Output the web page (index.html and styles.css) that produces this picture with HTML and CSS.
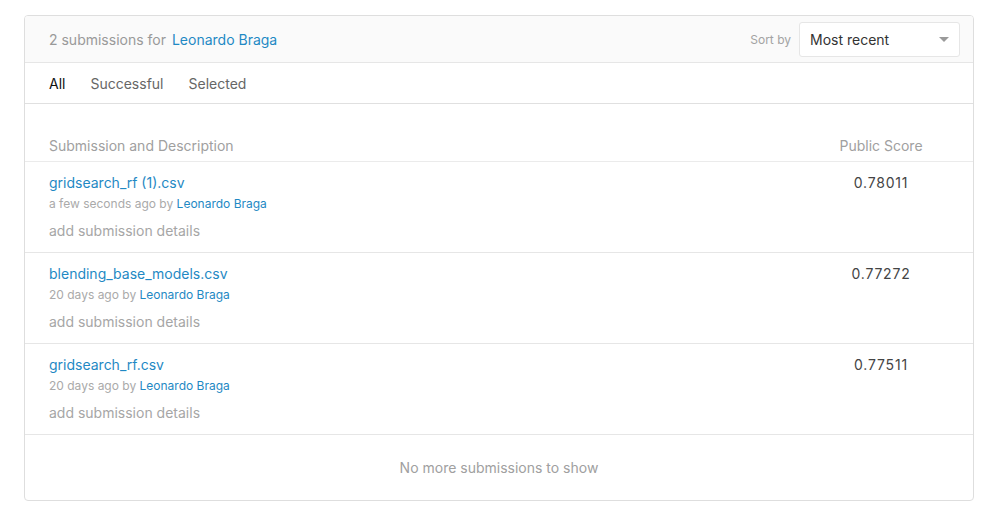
FILE: index.html
```html
<!DOCTYPE html>
<html>
<head>
<meta charset="utf-8">
<link rel="stylesheet" href="styles.css">
</head>
<body>
<div class="card">
  <div class="card-head">
    <div class="title">2 submissions for <a class="link">Leonardo Braga</a></div>
    <div class="sort">
      <span class="sort-label">Sort by</span>
      <div class="select">
        <span>Most recent</span>
        <span class="caret"></span>
      </div>
    </div>
  </div>
  <div class="tabs">
    <span class="tab active">All</span>
    <span class="tab">Successful</span>
    <span class="tab">Selected</span>
  </div>
  <div class="table">
    <div class="thead">
      <div class="col-main">Submission and Description</div>
      <div class="col-score">Public Score</div>
    </div>
    <div class="row">
      <div class="col-main">
        <a class="name">gridsearch_rf (1).csv</a>
        <div class="meta">a few seconds ago by <a class="link">Leonardo Braga</a></div>
        <div class="details">add submission details</div>
      </div>
      <div class="col-score score">0.78011</div>
    </div>
    <div class="row">
      <div class="col-main">
        <a class="name">blending_base_models.csv</a>
        <div class="meta">20 days ago by <a class="link">Leonardo Braga</a></div>
        <div class="details">add submission details</div>
      </div>
      <div class="col-score score">0.77272</div>
    </div>
    <div class="row">
      <div class="col-main">
        <a class="name">gridsearch_rf.csv</a>
        <div class="meta">20 days ago by <a class="link">Leonardo Braga</a></div>
        <div class="details">add submission details</div>
      </div>
      <div class="col-score score">0.77511</div>
    </div>
    <div class="foot">No more submissions to show</div>
  </div>
</div>
</body>
</html>
```

FILE: styles.css
```css
* { box-sizing: border-box; }
html, body { margin: 0; padding: 0; background: #fff; }
body {
  font-family: Inter, "Noto Sans", sans-serif;
  font-size: 14px;
  color: #333;
  padding: 15px 25px 0 24px;
}
.card {
  width: 950px;
  border: 1px solid #dedede;
  border-radius: 4px;
  overflow: hidden;
}
.card-head {
  height: 47px;
  background: #fafafa;
  border-bottom: 1px solid #e6e6e6;
  display: flex;
  align-items: center;
  justify-content: space-between;
  padding: 0 13px 0 24px;
}
.title { color: #999; font-size: 14px; }
.link { color: #1f89c4; text-decoration: none; }
.title .link { margin-left: 2px; }
.sort { display: flex; align-items: center; gap: 8px; }
.sort-label { color: #a3a3a3; font-size: 12px; }
.select {
  width: 161px;
  height: 35px;
  background: #fff;
  border: 1px solid #e6e6e6;
  border-radius: 3px;
  display: flex;
  align-items: center;
  justify-content: space-between;
  padding: 0 10px 0 10px;
  color: #333;
  font-size: 14px;
}
.caret {
  width: 0; height: 0;
  border-left: 5px solid transparent;
  border-right: 5px solid transparent;
  border-top: 5px solid #9a9a9a;
}
.tabs {
  height: 41px;
  border-bottom: 1px solid #e0e0e0;
  display: flex;
  align-items: center;
  padding: 0 24px;
  gap: 25px;
}
.tab { color: #666; font-size: 14px; }
.tab.active { color: #111; }
.table { padding-top: 32px; }
.thead {
  display: flex;
  align-items: center;
  height: 26px;
  border-bottom: 1px solid #ebebeb;
  padding: 0 24px 6px;
  color: #a0a0a0;
  font-size: 14px;
}
.col-main { flex: 1; }
.col-score { width: 136px; text-align: center; }
.row {
  display: flex;
  height: 91px;
  border-bottom: 1px solid #e6e6e6;
  padding: 12px 24px 0;
}
.name { color: #1f89c4; font-size: 14px; display: block; line-height: 18px; }
.meta { color: #aaa; font-size: 12px; margin-top: 4px; line-height: 16px; }
.details { color: #a6a6a6; font-size: 14px; margin-top: 10px; line-height: 18px; }
.score { color: #444; font-size: 14px; line-height: 18px; letter-spacing: 0.8px; }
.foot {
  height: 65px;
  display: flex;
  align-items: center;
  justify-content: center;
  color: #a0a0a0;
  font-size: 14px;
}
```
